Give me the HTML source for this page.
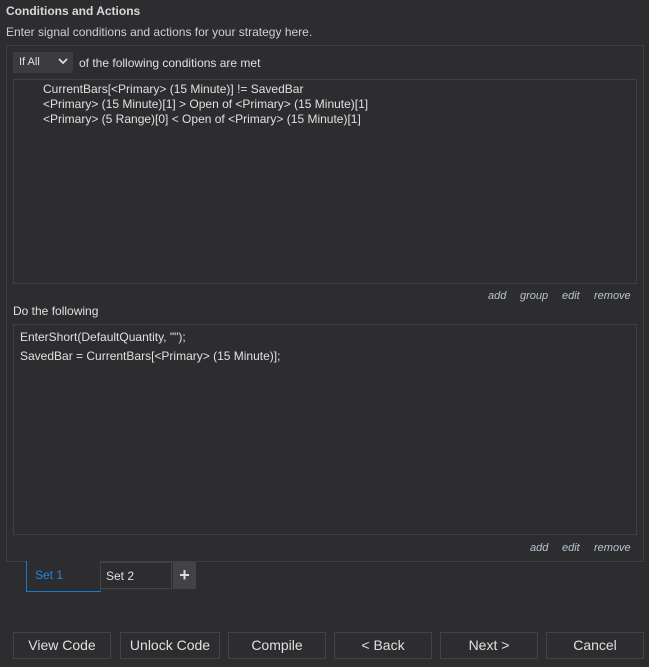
<!DOCTYPE html>
<html><head><style>
*{box-sizing:border-box;margin:0;padding:0}
body{width:649px;height:667px;background:#2d2d30;color:#e0e0e0;font-family:"Liberation Sans",sans-serif;font-size:12px;position:relative;overflow:hidden}
.a{position:absolute;white-space:nowrap}
.box{position:absolute;border:1px solid #404043;background:#2d2d30}
.lk{position:absolute;font-style:italic;color:#b8c4d0;font-size:11px}
.btn{position:absolute;top:632px;height:27px;border:1px solid #434346;background:#2d2d30;color:#e0e0e0;font-size:14px;text-align:center;line-height:25px}
</style></head><body>
<div class="a" style="left:6px;top:4px;font-weight:bold;color:#d8d8d8">Conditions and Actions</div>
<div class="a" style="left:6px;top:25px;color:#d0d0d0">Enter signal conditions and actions for your strategy here.</div>
<div class="box" style="left:6px;top:45px;width:638px;height:517px"></div>
<div class="a" style="left:13px;top:52px;width:60px;height:21px;background:#3c3c40;padding:4px 0 0 6px;font-size:11px">If All</div>
<svg class="a" style="left:58px;top:58px" width="10" height="7"><path d="M1 1L5 5L9 1" stroke="#ddd" stroke-width="1.8" fill="none"/></svg>
<div class="a" style="left:79px;top:56px">of the following conditions are met</div>
<div class="box" style="left:13px;top:79px;width:624px;height:205px"></div>
<div class="a" style="left:43px;top:82px;line-height:15px">CurrentBars[&lt;Primary&gt; (15 Minute)] != SavedBar<br>&lt;Primary&gt; (15 Minute)[1] &gt; Open of &lt;Primary&gt; (15 Minute)[1]<br>&lt;Primary&gt; (5 Range)[0] &lt; Open of &lt;Primary&gt; (15 Minute)[1]</div>
<div class="lk" style="left:488px;top:290px">add</div>
<div class="lk" style="left:520px;top:290px">group</div>
<div class="lk" style="left:562px;top:290px">edit</div>
<div class="lk" style="left:594px;top:290px">remove</div>
<div class="a" style="left:13px;top:304px">Do the following</div>
<div class="box" style="left:13px;top:324px;width:624px;height:211px"></div>
<div class="a" style="left:20px;top:328px;line-height:19px">EnterShort(DefaultQuantity, "");<br>SavedBar = CurrentBars[&lt;Primary&gt; (15 Minute)];</div>
<div class="lk" style="left:530px;top:542px">add</div>
<div class="lk" style="left:562px;top:542px">edit</div>
<div class="lk" style="left:594px;top:542px">remove</div>
<div class="a" style="left:26px;top:561px;width:75px;height:31px;background:#2d2d30;border-left:1px solid #1a7ad0;border-bottom:1px solid #1a7ad0;border-right:1px solid #434346;color:#1e88e5;padding:7px 0 0 8px">Set 1</div>
<div class="a" style="left:101px;top:562px;width:71px;height:27px;border:1px solid #434346;border-left:none;padding:6px 0 0 5px">Set 2</div>
<div class="a" style="left:173px;top:562px;width:23px;height:27px;background:#434347;color:#ddd;font-size:18px;font-weight:bold;text-align:center;line-height:26px">+</div>
<div class="btn" style="left:13px;width:98px">View Code</div>
<div class="btn" style="left:120px;width:100px">Unlock Code</div>
<div class="btn" style="left:228px;width:98px">Compile</div>
<div class="btn" style="left:334px;width:98px">&lt; Back</div>
<div class="btn" style="left:440px;width:98px">Next &gt;</div>
<div class="btn" style="left:546px;width:98px">Cancel</div>
</body></html>
